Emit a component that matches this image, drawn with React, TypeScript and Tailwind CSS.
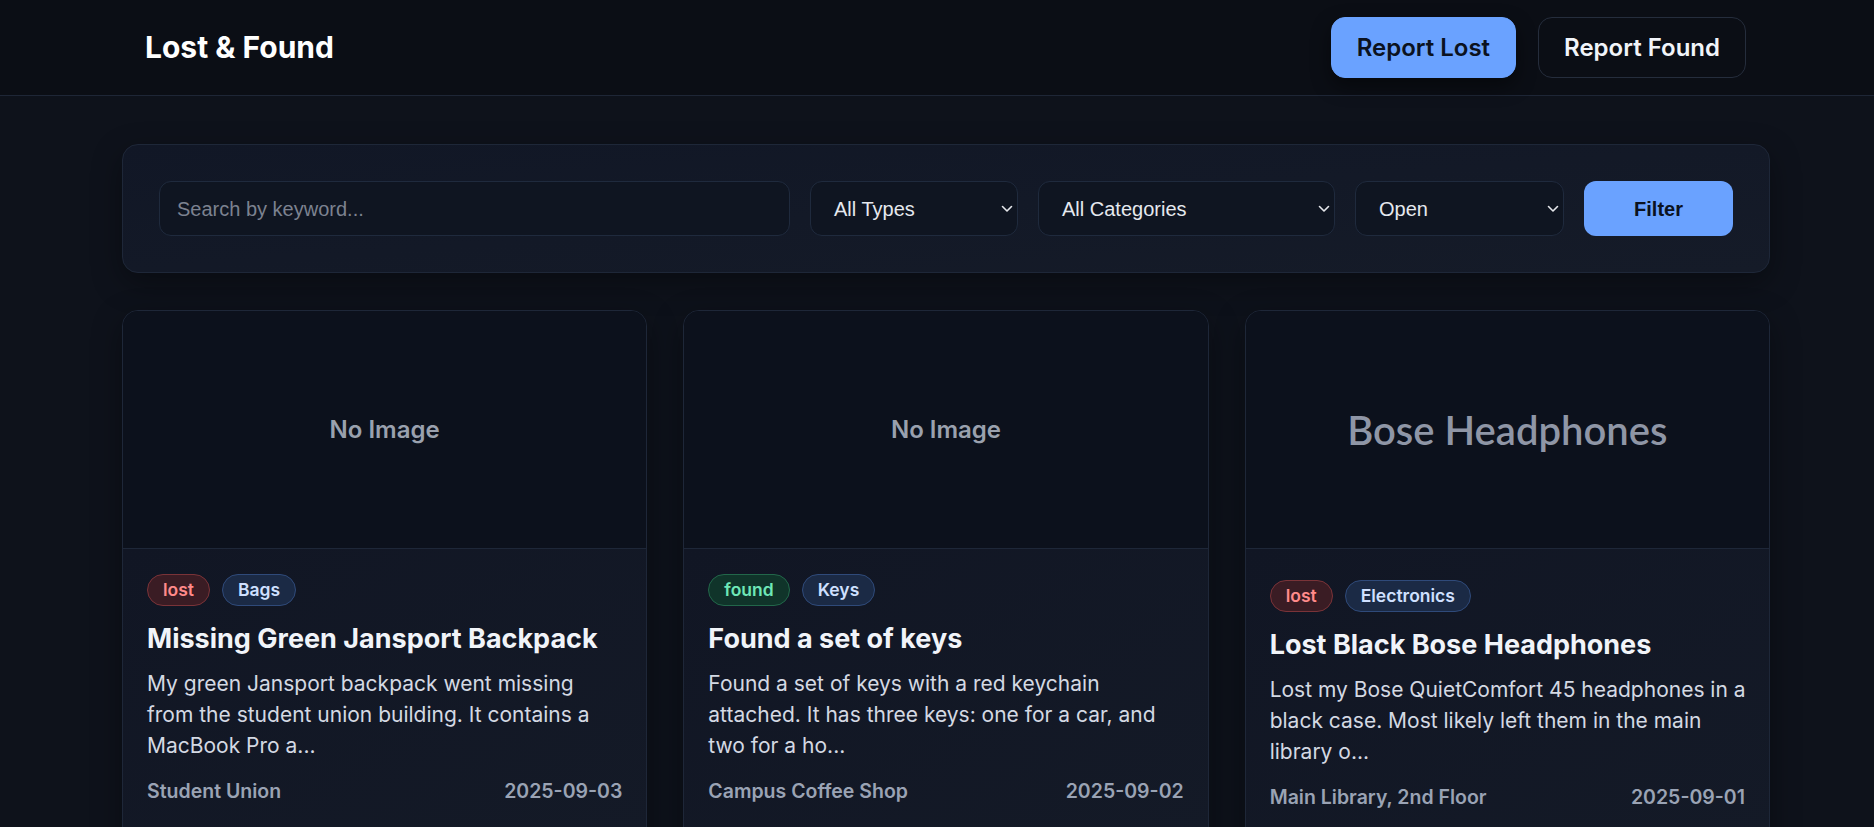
import React from 'react';

type Item = {
  type: 'lost' | 'found';
  category: string;
  title: string;
  lines: string[];
  place: string;
  date: string;
  image?: string;
};

const items: Item[] = [
  {
    type: 'lost',
    category: 'Bags',
    title: 'Missing Green Jansport Backpack',
    lines: ['My green Jansport backpack went missing', 'from the student union building. It contains a', 'MacBook Pro a...'],
    place: 'Student Union',
    date: '2025-09-03',
  },
  {
    type: 'found',
    category: 'Keys',
    title: 'Found a set of keys',
    lines: ['Found a set of keys with a red keychain', 'attached. It has three keys: one for a car, and', 'two for a ho...'],
    place: 'Campus Coffee Shop',
    date: '2025-09-02',
  },
  {
    type: 'lost',
    category: 'Electronics',
    title: 'Lost Black Bose Headphones',
    lines: ['Lost my Bose QuietComfort 45 headphones in a', 'black case. Most likely left them in the main', 'library o...'],
    place: 'Main Library, 2nd Floor',
    date: '2025-09-01',
    image: 'Bose Headphones',
  },
];

const inter = { fontFamily: 'Inter, "Noto Sans", sans-serif' };

const Chevron = () => (
  <svg
    className="pointer-events-none absolute right-[5px] top-1/2 -translate-y-1/2"
    width="12"
    height="8"
    viewBox="0 0 12 8"
    fill="none"
  >
    <path d="M1.5 1.5 L6 6 L10.5 1.5" stroke="#e5e7eb" strokeWidth="1.6" strokeLinecap="round" strokeLinejoin="round" />
  </svg>
);

const Select = ({ label, width }: { label: string; width: string }) => (
  <div className={`relative ${width} h-[55px] shrink-0`}>
    <div className="flex h-full items-center rounded-[12px] border border-[#1f2a3d] bg-[#0f1521] pl-[23px] text-[20px] text-[#e6e9ef] font-['Liberation_Sans',Arial,sans-serif]">
      {label}
    </div>
    <Chevron />
  </div>
);

const Card = ({ item, shift }: { item: Item; shift: boolean }) => {
  const typeTag =
    item.type === 'lost'
      ? 'border-[#7a3338] bg-[#3a1c24] text-[#ff8a8a]'
      : 'border-[#22674a] bg-[#10342a] text-[#6ee7b7]';
  return (
    <div className="overflow-hidden rounded-[16px] border border-[#1e2738] shadow-[0_10px_30px_rgba(0,0,0,0.35)]" style={inter}>
      <div className="flex h-[238px] items-center justify-center border-b border-[#1e2738] bg-[#0c111c]">
        {item.image ? (
          <span className="font-['Lato',sans-serif] text-[40px] font-semibold text-[#8f96a6]">{item.image}</span>
        ) : (
          <span className="text-[24px] font-semibold text-[#9aa1ae]">No Image</span>
        )}
      </div>
      <div className="h-[300px] bg-gradient-to-br from-[#111624] to-[#141a27] px-6 pt-[25px]">
        <div className={`flex gap-3 ${shift ? 'mt-[6px]' : ''}`}>
          <span className={`flex h-[32px] items-center rounded-full border px-[15px] text-[17.5px] font-semibold ${typeTag}`}>
            {item.type}
          </span>
          <span className="flex h-[32px] items-center rounded-full border border-[#2f4a7a] bg-[#1b2a45] px-[15px] text-[17.5px] font-semibold text-[#cfe0ff]">
            {item.category}
          </span>
        </div>
        <h3 className="mt-[17px] text-[27px] leading-[32px] font-bold text-[#f1f4f9]">{item.title}</h3>
        <p className="mt-[13px] text-[21px] leading-[31px] text-[#d4d9e3] whitespace-nowrap">
          {item.lines.map((l, i) => (
            <React.Fragment key={i}>
              {l}
              {i < item.lines.length - 1 && <br />}
            </React.Fragment>
          ))}
        </p>
        <div className="mt-[17px] flex items-center justify-between text-[19.5px] leading-[26px] font-semibold text-[#9aa3b4]">
          <span>{item.place}</span>
          <span>{item.date}</span>
        </div>
      </div>
    </div>
  );
};

export default function App() {
  return (
    <div className="min-h-screen bg-[#0e121b]" style={inter}>
      <header className="h-[96px] border-b border-[#1e2636] bg-[#0b0e15]">
        <div className="ml-[122px] flex h-full w-[1648px] items-center justify-between pl-[23px] pr-6">
          <h1 className="text-[30px] font-bold text-white">Lost &amp; Found</h1>
          <div className="flex items-center gap-[22px]">
            <button className="h-[61px] rounded-[14px] border border-[#6aa2ff] bg-[#6aa2ff] px-[25px] text-[24px] font-semibold text-[#0b1220] shadow-[0_8px_20px_rgba(0,0,0,0.45)]">
              Report Lost
            </button>
            <button className="h-[61px] rounded-[14px] border border-[#252d3c] bg-[#0b0e15] px-[25px] text-[24px] font-semibold text-[#f1f4f9]">
              Report Found
            </button>
          </div>
        </div>
      </header>

      <main className="ml-[122px] w-[1648px] pt-[48px]">
        <div className="flex items-center gap-5 rounded-[16px] border border-[#1e2738] bg-gradient-to-br from-[#111726] to-[#151b28] p-9 shadow-[0_10px_30px_rgba(0,0,0,0.35)]">
          <div className="flex h-[55px] flex-1 items-center rounded-[12px] border border-[#1f2a3d] bg-[#0f1521] pl-[17px] text-[20px] text-[#7c8290] font-['Liberation_Sans',Arial,sans-serif]">
            Search by keyword...
          </div>
          <Select label="All Types" width="w-[208px]" />
          <Select label="All Categories" width="w-[297px]" />
          <Select label="Open" width="w-[209px]" />
          <button className="h-[55px] w-[149px] shrink-0 rounded-[12px] bg-[#6aa2ff] text-[20px] font-bold text-[#0b1220] font-['Liberation_Sans',Arial,sans-serif]">
            Filter
          </button>
        </div>

        <div className="mt-[37px] grid grid-cols-3 gap-9">
          {items.map((item, i) => (
            <Card key={i} item={item} shift={i === 2} />
          ))}
        </div>
      </main>
    </div>
  );
}
